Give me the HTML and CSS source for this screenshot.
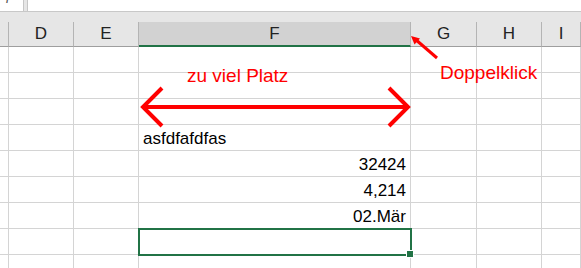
FILE: index.html
```html
<!DOCTYPE html>
<html lang="de">
<head>
  <meta charset="UTF-8" />
  <title>Spaltenbreite</title>
  <link rel="stylesheet" href="styles.css">
</head>
<body>
  <div class="formula-bar">
    <div class="name-fx"><span>fx</span></div>
    <div class="formula-input"></div>
  </div>
  <div class="bar-gap"></div>

  <div class="sheet">
    <div class="row head">
      <div class="cell"></div>
      <div class="cell">D</div>
      <div class="cell">E</div>
      <div class="cell active">F</div>
      <div class="cell">G</div>
      <div class="cell">H</div>
      <div class="cell">I</div>
    </div>
    <div class="row"><div class="cell"></div><div class="cell"></div><div class="cell"></div><div class="cell"></div><div class="cell"></div><div class="cell"></div><div class="cell"></div></div>
    <div class="row"><div class="cell"></div><div class="cell"></div><div class="cell"></div><div class="cell"></div><div class="cell"></div><div class="cell"></div><div class="cell"></div></div>
    <div class="row"><div class="cell"></div><div class="cell"></div><div class="cell"></div><div class="cell"></div><div class="cell"></div><div class="cell"></div><div class="cell"></div></div>
    <div class="row"><div class="cell"></div><div class="cell"></div><div class="cell"></div><div class="cell">asfdfafdfas</div><div class="cell"></div><div class="cell"></div><div class="cell"></div></div>
    <div class="row"><div class="cell"></div><div class="cell"></div><div class="cell"></div><div class="cell num">32424</div><div class="cell"></div><div class="cell"></div><div class="cell"></div></div>
    <div class="row"><div class="cell"></div><div class="cell"></div><div class="cell"></div><div class="cell num">4,214</div><div class="cell"></div><div class="cell"></div><div class="cell"></div></div>
    <div class="row"><div class="cell"></div><div class="cell"></div><div class="cell"></div><div class="cell num">02.Mär</div><div class="cell"></div><div class="cell"></div><div class="cell"></div></div>
    <div class="row"><div class="cell"></div><div class="cell"></div><div class="cell"></div><div class="cell selected"></div><div class="cell"></div><div class="cell"></div><div class="cell"></div></div>
    <div class="row"><div class="cell"></div><div class="cell"></div><div class="cell"></div><div class="cell"></div><div class="cell"></div><div class="cell"></div><div class="cell"></div></div>
  </div>

  <!-- rote Anmerkungen über der Tabelle -->
  <svg class="notes" width="581" height="268" viewBox="0 0 581 268">
    <g stroke="#ff0000" stroke-width="4" fill="none" stroke-linejoin="miter">
      <line x1="145" y1="107" x2="406" y2="107" />
      <polyline points="162,88 143,107 162,126" />
      <polyline points="389,88 408,107 389,126" />
    </g>
    <line x1="437" y1="58" x2="415" y2="39" stroke="#ff0000" stroke-width="3" />
    <polygon points="411,36 420,38.5 414.5,44.5" fill="#ff0000" />
    <text x="187" y="82" class="note-text">zu viel Platz</text>
    <text x="440" y="79" class="note-text">Doppelklick</text>
  </svg>
</body>
</html>
```

FILE: styles.css
```css
body {
  margin: 0;
  width: 581px;
  height: 268px;
  overflow: hidden;
  background-color: #ffffff;
  font-family: "Liberation Sans", Arial, sans-serif;
  position: relative;
}
.formula-bar {
  display: flex;
  height: 12px;
  box-sizing: border-box;
  border-bottom: 1px solid #c8c8c8;
  background-color: #e6e6e6;
}
.name-fx {
  width: 24px;
  box-sizing: border-box;
  background-color: #ffffff;
  border-right: 1px solid #c6c6c6;
  overflow: hidden;
}
.name-fx span {
  display: block;
  margin: -12px 0 0 6px;
  font-family: "Liberation Serif", serif;
  font-style: italic;
  font-size: 15px;
  line-height: 15px;
  color: #555;
}
.formula-input {
  flex: 1;
  margin-left: 3px;
  background-color: #ffffff;
  border-left: 1px solid #c6c6c6;
}
.bar-gap {
  height: 10px;
  background-color: #e6e6e6;
}

/* Tabelle */
.row {
  display: grid;
  grid-template-columns: 9px 65px 65px 272px 66px 65px 1fr;
  height: 26px;
}
.cell {
  box-sizing: border-box;
  border-right: 1px solid #d4d4d4;
  border-bottom: 1px solid #d4d4d4;
  font-size: 17px;
  line-height: 25px;
  padding: 1px 4px 0;
  color: #000;
  white-space: nowrap;
  overflow: hidden;
}
.num {
  text-align: right;
}
.head {
  height: 25px;
  background-color: #e6e6e6;
}
.head .cell {
  border-right-color: #b4b4b4;
  border-bottom-color: #9e9e9e;
  text-align: center;
  line-height: 24px;
  padding: 0;
  color: #222;
}
.head .active {
  background-color: #d2d2d2;
  border-bottom: 2px solid #217346;
}
.selected {
  position: relative;
  overflow: visible;
  outline: 2px solid #217346;
  outline-offset: -1px;
}
.selected::after {
  content: "";
  position: absolute;
  right: -4px;
  bottom: -4px;
  width: 6px;
  height: 6px;
  background-color: #217346;
  border: 1px solid #ffffff;
}

/* Anmerkungen */
.notes {
  position: absolute;
  left: 0;
  top: 0;
}
.note-text {
  fill: #ff0000;
  font-family: "Liberation Sans", Arial, sans-serif;
  font-size: 19px;
}
```
